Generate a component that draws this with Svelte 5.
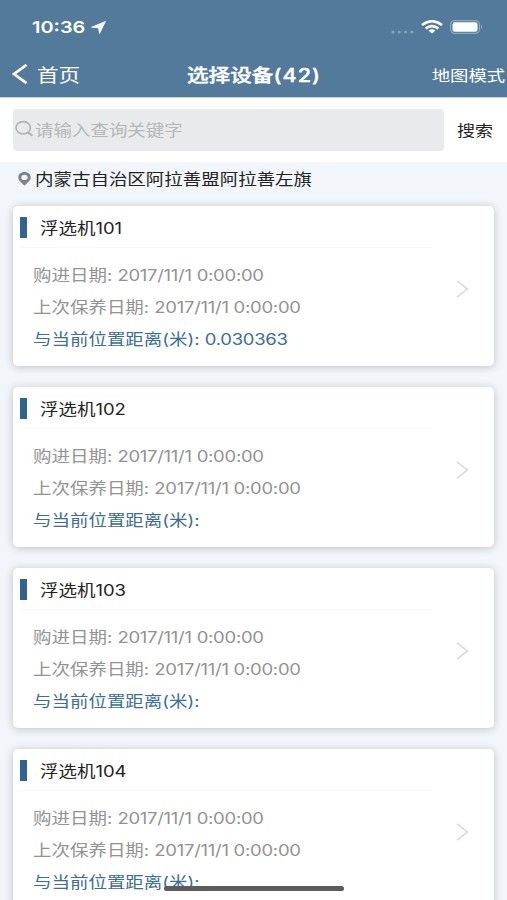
<script lang="ts">
  interface Device {
    name: string
    bought: string
    serviced: string
    distance: string
  }

  const date = '2017/11/1 0:00:00'

  const devices: Device[] = [
    { name: '浮选机101', bought: date, serviced: date, distance: '0.030363' },
    { name: '浮选机102', bought: date, serviced: date, distance: '' },
    { name: '浮选机103', bought: date, serviced: date, distance: '' },
    { name: '浮选机104', bought: date, serviced: date, distance: '' },
  ]
</script>

<div class="screen">
  <header>
    <div class="status">
      <span class="wide time">10:36</span>
      <svg class="arrow" width="15" height="13" viewBox="0 0 14 12">
        <path d="M13.5 0.3 L8 11.6 L7 6.4 L0.5 5.8 Z" fill="#fff" stroke="#fff" stroke-width="0.7" stroke-linejoin="round" />
      </svg>
      <svg class="dots" width="23" height="4" viewBox="0 0 23 4" fill="#86a3bc">
        <circle cx="2" cy="2" r="1.6" />
        <circle cx="8.3" cy="2" r="1.6" />
        <circle cx="14.6" cy="2" r="1.6" />
        <circle cx="20.9" cy="2" r="1.6" />
      </svg>
      <svg class="wifi" width="22" height="14" viewBox="0 0 22 14" fill="none" stroke="#fff" stroke-width="2.6">
        <path d="M1 5 Q11 -2.6 21 5" />
        <path d="M4.6 8.5 Q11 3.6 17.4 8.5" />
        <path d="M7.5 10.5 Q11 8 14.5 10.5 L11 13.6 Z" fill="#fff" stroke="none" />
      </svg>
      <svg class="battery" width="33" height="14" viewBox="0 0 33 14">
        <rect x="0.6" y="0.6" width="28.8" height="12.8" rx="3.8" fill="none" stroke="#8ca8bf" stroke-width="1.2" />
        <rect x="2.5" y="2.3" width="25" height="9.4" rx="2.2" fill="#fff" />
        <path d="M31 4.8 Q33.6 7 31 9.2 Z" fill="#8ca8bf" />
      </svg>
    </div>
    <nav>
      <div class="back">
        <svg width="16" height="20" viewBox="0 0 16 20" fill="none" stroke="#fff" stroke-width="2.7">
          <path d="M14.5 0.9 L2 10 L14.5 19.1" />
        </svg>
        <span class="wide">首页</span>
      </div>
      <h1><span class="wide">选择设备<span class="count">(42)</span></span></h1>
      <div class="mode"><span class="wide">地图模式</span></div>
    </nav>
  </header>

  <div class="search">
    <div class="field">
      <svg width="20" height="18" viewBox="0 0 20 18" fill="none" stroke="#b0b2b4" stroke-width="1.6">
        <ellipse cx="8.2" cy="7.8" rx="7.2" ry="6.2" />
        <path d="M13.1 12.4 L17.5 15.8" stroke-width="2" />
      </svg>
      <span class="wide">请输入查询关键字</span>
    </div>
    <div class="submit"><span class="wide">搜索</span></div>
  </div>

  <div class="address">
    <svg width="13" height="14" viewBox="0 0 13 14">
      <path
        d="M6.5 0 C2.9 0 0.3 2.4 0.3 5.4 C0.3 8.7 4 10.9 6.5 13.8 C9 10.9 12.7 8.7 12.7 5.4 C12.7 2.4 10.1 0 6.5 0 Z M6.5 2.7 A3.2 2.7 0 1 1 6.5 8.1 A3.2 2.7 0 1 1 6.5 2.7 Z"
        fill="#808386"
        fill-rule="evenodd"
      />
    </svg>
    <span class="wide">内蒙古自治区阿拉善盟阿拉善左旗</span>
  </div>

  <ul>
    {#each devices as device}
      <li>
        <div class="name"><span class="wide">{device.name}</span></div>
        <div class="body">
          <div class="lines">
            <p><span class="wide">购进日期: <span class="value">{device.bought}</span></span></p>
            <p><span class="wide">上次保养日期: <span class="value">{device.serviced}</span></span></p>
            <p class="distance">
              <span class="wide">与当前位置距离(米): <span class="value">{device.distance}</span></span>
            </p>
          </div>
          <svg width="13" height="18" viewBox="0 0 13 18" fill="none" stroke="#dcdcdc" stroke-width="1.7">
            <path d="M1 0.8 L11.5 9 L1 17.2" />
          </svg>
        </div>
      </li>
    {/each}
  </ul>

  <div class="home-indicator"></div>
</div>

<style>
  :global(body) {
    margin: 0;
  }

  .screen {
    position: relative;
    height: 900px;
    overflow: hidden;
    background: #f2f6fa;
    font-family: Inter, 'Noto Sans CJK SC', sans-serif;
    font-size: 15.4px;
    color: #222;
  }

  .wide {
    display: inline-block;
    white-space: nowrap;
    transform: scaleX(1.2);
    transform-origin: left center;
  }

  header {
    height: 98px;
    border-bottom: 1px solid #c5d5e3;
    box-sizing: border-box;
    background: #537a9b;
    color: #fff;
  }

  .status {
    display: flex;
    align-items: center;
    height: 54px;
    padding: 0 24px 0 32px;
    box-sizing: border-box;
  }

  .time {
    width: 59px;
    font-size: 16.6px;
    font-weight: 600;
  }

  .dots {
    margin: 9px 7px 0 auto;
  }

  .wifi {
    margin-right: 7px;
  }

  nav {
    display: grid;
    grid-template-columns: 1fr 134px 1fr;
    align-items: center;
    height: 40px;
    font-size: 18px;
  }

  .back {
    display: flex;
    align-items: center;
    gap: 10px;
    padding-left: 12px;
  }

  .back .wide {
    margin-left: -1px;
  }

  h1 {
    margin: 0;
    font-size: 18px;
    font-weight: 500;
    -webkit-text-stroke: 0.4px #fff;
  }

  .count {
    font-weight: 500;
    letter-spacing: 0.9px;
  }

  .mode {
    padding-right: 2px;
    text-align: right;
    font-size: 15.3px;
  }

  .mode .wide {
    transform-origin: right center;
  }

  .search {
    display: flex;
    align-items: center;
    height: 64px;
    padding: 0 14px 0 13px;
    background: #fff;
  }

  .field {
    display: flex;
    align-items: center;
    width: 431px;
    height: 42px;
    padding: 0 0 2px 2px;
    box-sizing: border-box;
    border-radius: 4px;
    background: #e9eaec;
    color: #b5b7b9;
  }

  .submit {
    margin: -2px 0 0 13px;
    font-size: 15px;
  }

  .address {
    display: flex;
    align-items: center;
    gap: 4px;
    height: 34px;
    padding-left: 18px;
  }

  .address .wide {
    margin-top: -2px;
  }

  ul {
    display: grid;
    gap: 21px;
    margin: 0;
    padding: 10px 13px 0;
    list-style: none;
  }

  li {
    height: 160px;
    border-radius: 5px;
    background: #fff;
    box-shadow: 0 1px 8px rgba(0, 0, 0, 0.22);
  }

  .name {
    display: flex;
    align-items: center;
    width: 412px;
    height: 42px;
    margin-left: 7px;
    border-bottom: 1px solid #fafafa;
    box-sizing: border-box;
  }

  .name::before {
    content: '';
    width: 7px;
    height: 21px;
    margin: 2px 13px 0 0;
    background: #30638f;
  }

  .body {
    display: flex;
    align-items: center;
    justify-content: space-between;
    padding: 12px 25px 0 20px;
    color: #929292;
  }

  .body svg {
    margin-top: -39px;
  }

  p {
    height: 32px;
    margin: 0;
    line-height: 32px;
  }

  .value {
    letter-spacing: -0.22px;
  }

  .distance {
    color: #3c6d9a;
  }

  .home-indicator {
    position: absolute;
    left: 164px;
    bottom: 9px;
    width: 180px;
    height: 5px;
    border-radius: 3px;
    background: #5c5c5c;
  }
</style>
